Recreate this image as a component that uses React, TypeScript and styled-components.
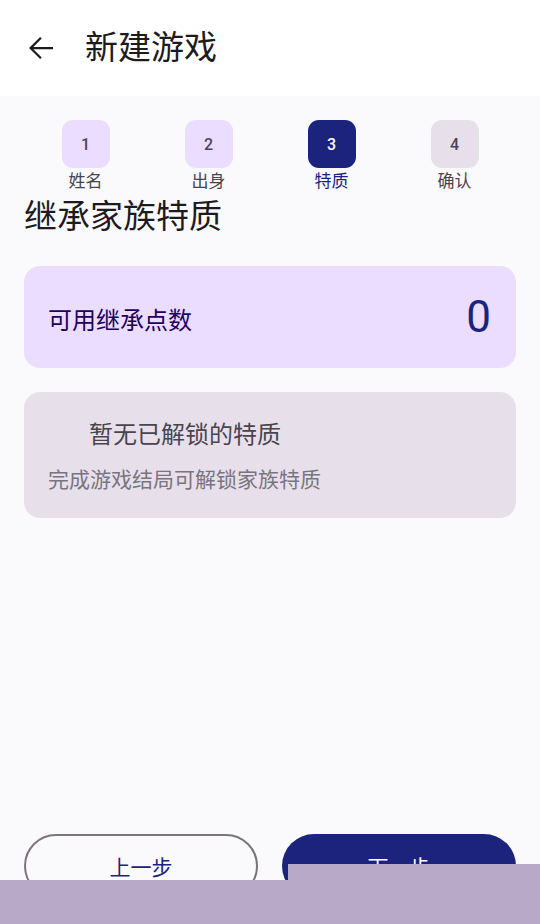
import React from 'react';
import styled, { createGlobalStyle } from 'styled-components';

const GlobalStyle = createGlobalStyle`
  html, body {
    margin: 0;
    padding: 0;
    background: #faf9fb;
  }
  body {
    font-family: Roboto, "Noto Sans CJK SC", "Noto Sans", sans-serif;
  }
`;

const Page = styled.div`
  position: relative;
  width: 540px;
  height: 924px;
  display: flex;
  flex-direction: column;
  overflow: hidden;
  background: #faf9fb;
`;

const TopBar = styled.header`
  height: 96px;
  flex-shrink: 0;
  display: flex;
  align-items: center;
  background: #ffffff;
  padding-left: 23px;
  box-sizing: border-box;
`;

const BackButton = styled.button`
  width: 36px;
  height: 36px;
  padding: 0;
  border: none;
  background: transparent;
  display: flex;
  align-items: center;
  justify-content: center;
  color: #1d1b20;
`;

const Title = styled.h1`
  margin: 0 0 0 26px;
  font-size: 33px;
  font-weight: 400;
  line-height: 40px;
  color: #1d1b20;
`;

const Body = styled.main`
  flex: 1;
  display: flex;
  flex-direction: column;
  padding: 24px 24px 26px;
`;

const Stepper = styled.div`
  display: grid;
  grid-template-columns: repeat(4, 1fr);
`;

const Step = styled.div`
  display: flex;
  flex-direction: column;
  align-items: center;
`;

const StepBox = styled.div<{ $state: 'done' | 'active' | 'todo' }>`
  width: 48px;
  height: 48px;
  border-radius: 11px;
  display: flex;
  align-items: center;
  justify-content: center;
  font-size: 16px;
  font-weight: 500;
  background: ${p => (p.$state === 'active' ? '#1b237d' : p.$state === 'done' ? '#eaddff' : '#e7e0eb')};
  color: ${p => (p.$state === 'active' ? '#ffffff' : '#4a4458')};
`;

const StepLabel = styled.div<{ $active?: boolean }>`
  margin-top: 3px;
  font-size: 17px;
  line-height: 20px;
  color: ${p => (p.$active ? '#1b237d' : '#49454f')};
`;

const Heading = styled.h2`
  margin: 6px 0 0;
  font-size: 33px;
  font-weight: 400;
  line-height: 40px;
  color: #1d1b20;
`;

const PointsCard = styled.section`
  margin-top: 29px;
  height: 102px;
  border-radius: 16px;
  background: #eaddff;
  display: flex;
  align-items: center;
  justify-content: space-between;
  padding: 0 25px 0 24px;
  box-sizing: border-box;
`;

const PointsLabel = styled.span`
  font-size: 24px;
  color: #21005d;
  margin-top: 2px;
`;

const PointsValue = styled.span`
  font-size: 44px;
  color: #1b237d;
  line-height: 50px;
`;

const EmptyCard = styled.section`
  margin-top: 24px;
  border-radius: 16px;
  background: #e7e0eb;
  padding: 27px 24px 23px;
`;

const EmptyTitle = styled.div`
  font-size: 24px;
  line-height: 32px;
  color: #49454f;
  padding-left: 41px;
`;

const EmptyHint = styled.div`
  margin-top: 15px;
  font-size: 21px;
  line-height: 29px;
  color: #79747e;
`;

const Footer = styled.div`
  margin-top: auto;
  display: grid;
  grid-template-columns: 1fr 1fr;
  gap: 24px;
`;

const NavButton = styled.button<{ $primary?: boolean }>`
  height: 64px;
  border-radius: 32px;
  font-family: inherit;
  font-size: 21px;
  box-sizing: border-box;
  border: ${p => (p.$primary ? 'none' : '2px solid #79747e')};
  background: ${p => (p.$primary ? '#1b237d' : 'transparent')};
  color: ${p => (p.$primary ? '#ffffff' : '#1b237d')};
`;

const SystemOverlay = styled.div`
  position: absolute;
  left: 0;
  right: 0;
  bottom: 0;
  height: 44px;
  background: #b8a9c9;
`;

const OverlayTab = styled.div`
  position: absolute;
  left: 288px;
  right: 0;
  bottom: 44px;
  height: 16px;
  background: #b8a9c9;
`;

const steps = [
  { n: 1, label: '姓名', state: 'done' as const },
  { n: 2, label: '出身', state: 'done' as const },
  { n: 3, label: '特质', state: 'active' as const },
  { n: 4, label: '确认', state: 'todo' as const },
];

export default function App() {
  return (
    <Page>
      <GlobalStyle />
      <TopBar>
        <BackButton aria-label="返回">
          <svg width="36" height="36" viewBox="0 0 24 24" fill="currentColor">
            <path d="M20 11.25H6.9l5.6-5.6-1.06-1.06L4 12l7.44 7.41 1.06-1.06-5.6-5.6H20z" />
          </svg>
        </BackButton>
        <Title>新建游戏</Title>
      </TopBar>
      <Body>
        <Stepper>
          {steps.map(s => (
            <Step key={s.n}>
              <StepBox $state={s.state}>{s.n}</StepBox>
              <StepLabel $active={s.state === 'active'}>{s.label}</StepLabel>
            </Step>
          ))}
        </Stepper>
        <Heading>继承家族特质</Heading>
        <PointsCard>
          <PointsLabel>可用继承点数</PointsLabel>
          <PointsValue>0</PointsValue>
        </PointsCard>
        <EmptyCard>
          <EmptyTitle>暂无已解锁的特质</EmptyTitle>
          <EmptyHint>完成游戏结局可解锁家族特质</EmptyHint>
        </EmptyCard>
        <Footer>
          <NavButton>上一步</NavButton>
          <NavButton $primary>下一步</NavButton>
        </Footer>
      </Body>
      <OverlayTab />
      <SystemOverlay />
    </Page>
  );
}
